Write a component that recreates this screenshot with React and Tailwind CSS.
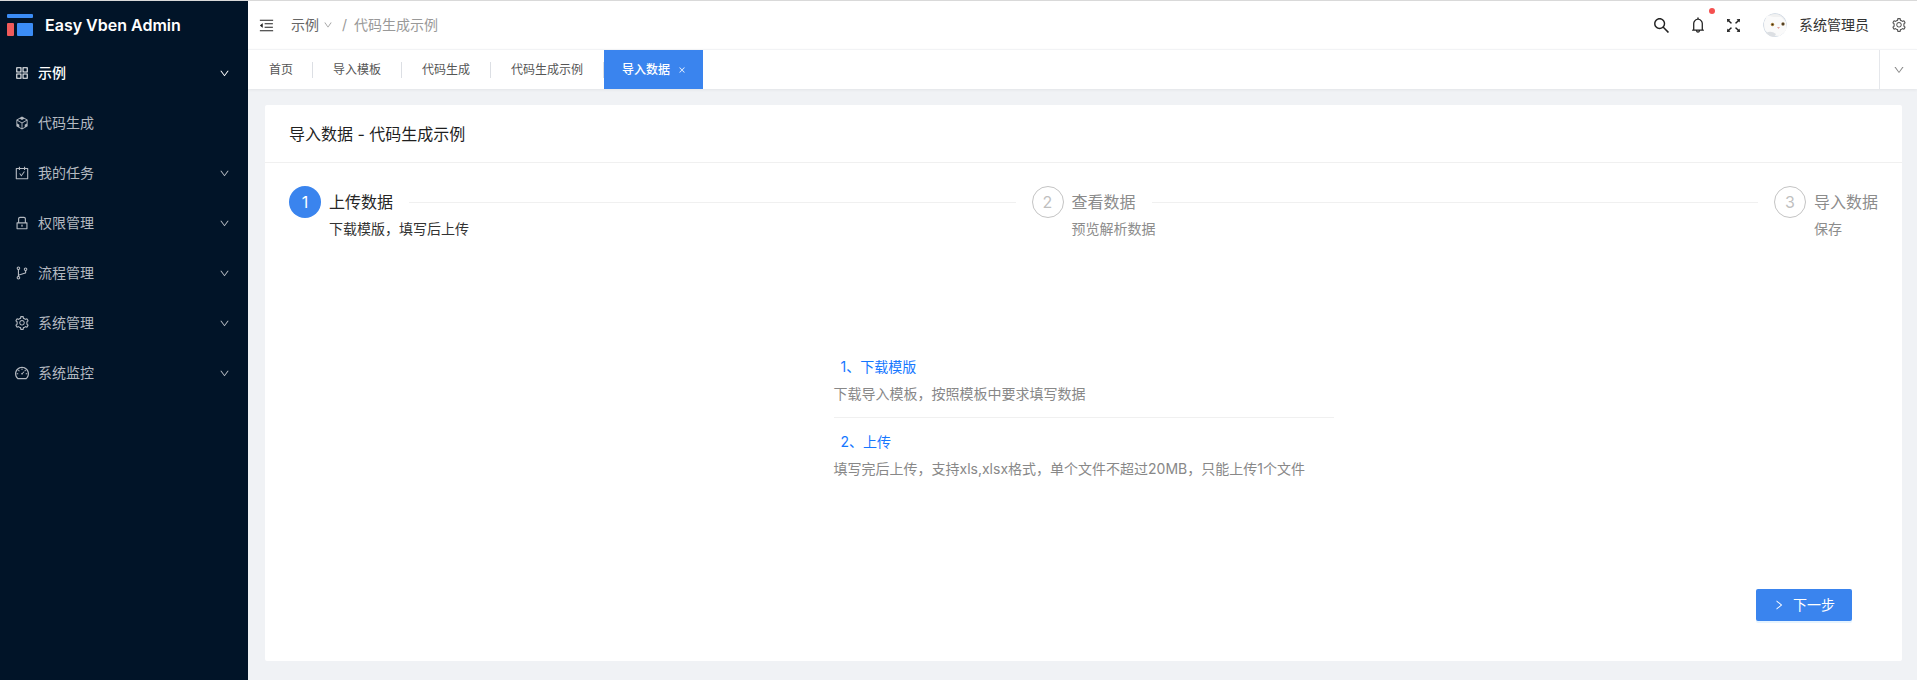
import React from 'react';
import {
  AiOutlineAppstore, AiOutlineCodeSandbox, AiOutlineCarryOut, AiOutlineLock, AiOutlineBranches,
  AiOutlineSetting, AiOutlineDashboard, AiOutlineDown, AiOutlineSearch, AiOutlineBell,
  AiOutlineFullscreen, AiOutlineMenuFold, AiOutlineRight, AiOutlineClose,
} from 'react-icons/ai';

const menu = [
  { label: '示例', icon: AiOutlineAppstore, arrow: true, active: true },
  { label: '代码生成', icon: AiOutlineCodeSandbox },
  { label: '我的任务', icon: AiOutlineCarryOut, arrow: true },
  { label: '权限管理', icon: AiOutlineLock, arrow: true },
  { label: '流程管理', icon: AiOutlineBranches, arrow: true },
  { label: '系统管理', icon: AiOutlineSetting, arrow: true },
  { label: '系统监控', icon: AiOutlineDashboard, arrow: true },
];

const tabs = ['首页', '导入模板', '代码生成', '代码生成示例'];

const steps = [
  { n: 1, title: '上传数据', desc: '下载模版，填写后上传', active: true },
  { n: 2, title: '查看数据', desc: '预览解析数据' },
  { n: 3, title: '导入数据', desc: '保存', last: true },
];

function Logo() {
  return (
    <svg width="27" height="22" viewBox="0 0 27 22" className="shrink-0">
      <rect x="0" y="0" width="26" height="4" rx="1" fill="#3b8cf5" />
      <rect x="0" y="9" width="7" height="13" rx="1" fill="#f05a5a" />
      <rect x="10" y="9" width="16" height="13" rx="1" fill="#3b8cf5" />
    </svg>
  );
}

// white cat face, small picture in the header
function CatAvatar() {
  return (
    <svg width="24" height="24" viewBox="0 0 24 24" className="rounded-full block">
      <circle cx="12" cy="12" r="12" fill="#d5dde6" />
      <circle cx="12" cy="12" r="11" fill="#f1f1f1" />
      <path d="M1 10 L4 2 L10 4 L18 4 L23 9 L24 17 L17 23 L7 22 L2 17 Z" fill="#fafafa" />
      <circle cx="9.5" cy="11.5" r="1.7" fill="#a8803c" />
      <circle cx="9.5" cy="11.5" r="0.8" fill="#2e2418" />
      <circle cx="20" cy="11" r="1.7" fill="#7a5f34" />
      <circle cx="20" cy="11" r="0.8" fill="#221a10" />
      <path d="M14 14 L17 14 L15.5 16 Z" fill="#e2a39c" />
      <path d="M3 20 Q8 17 13 21 L11 24 L5 24 Z" fill="#dcdfe3" />
    </svg>
  );
}

function Sidebar() {
  return (
    <aside className="w-[248px] shrink-0 bg-[#011428] flex flex-col">
      <div className="h-[47px] pl-[7px] flex items-center gap-[11px]">
        <Logo />
        <span className="text-white text-base font-semibold whitespace-nowrap">Easy Vben Admin</span>
      </div>
      {menu.map(m => (
        <div key={m.label} className={`h-[50px] pl-[14px] pr-[18px] flex items-center text-sm ${m.active ? 'text-white font-medium' : 'text-[#b4b9c0]'}`}>
          <m.icon size={16} />
          <span className="ml-[8px] flex-1">{m.label}</span>
          {m.arrow && <AiOutlineDown size={11} />}
        </div>
      ))}
    </aside>
  );
}

function Header() {
  return (
    <header className="h-[48px] shrink-0 bg-white flex items-center pl-[10px] pr-[10px]">
      <AiOutlineMenuFold size={17} className="text-[#222]" />
      <div className="ml-[16px] flex items-center text-sm">
        <span className="text-[#666]">示例</span>
        <AiOutlineDown size={10} className="ml-[4px] text-[#999]" />
        <span className="ml-[9px] text-[#999]">/</span>
        <span className="ml-[7px] text-[#999]">代码生成示例</span>
      </div>
      <div className="ml-auto flex items-center">
        <AiOutlineSearch size={19} className="text-[#222]" />
        <span className="relative ml-[18px]">
          <AiOutlineBell size={18} className="text-[#222]" />
          <span className="absolute -top-[8px] -right-[8px] w-[6px] h-[6px] rounded-full bg-[#f5504f]" />
        </span>
        <AiOutlineFullscreen size={19} className="ml-[17px] text-[#222]" />
        <span className="ml-[20px]"><CatAvatar /></span>
        <span className="ml-[12px] text-sm text-[#333]">系统管理员</span>
        <AiOutlineSetting size={16} className="ml-[22px] text-[#555]" />
      </div>
    </header>
  );
}

function Tabs() {
  return (
    <div className="h-[40px] shrink-0 bg-white flex shadow-[0_1px_3px_rgba(0,0,0,0.06)] border-t border-[#f2f3f5] relative">
      <div className="flex items-center text-xs text-[#555] pl-[21px]">
        {tabs.map((t, i) => (
          <React.Fragment key={t}>
            <span className="whitespace-nowrap">{t}</span>
            <span className={`w-px h-[16px] bg-[#dcdfe4] ${i === 0 ? 'ml-[19px] mr-[20px]' : i === 3 ? 'ml-[20px]' : 'mx-[20px]'}`} />
          </React.Fragment>
        ))}
      </div>
      <div className="w-[99px] bg-[#3a84ee] text-white text-xs font-medium flex items-center pl-[18px] gap-[8px]">
        <span>导入数据</span>
        <AiOutlineClose size={8} />
      </div>
      <div className="ml-auto w-[38px] border-l border-[#e5e7eb] flex items-center justify-center text-[#888]">
        <AiOutlineDown size={12} />
      </div>
    </div>
  );
}

function Steps() {
  return (
    <div className="flex px-6 pt-[23px]">
      {steps.map(s => (
        <div key={s.n} className={`flex ${s.last ? '' : 'flex-1'}`}>
          <div className={`w-8 h-8 shrink-0 rounded-full flex items-center justify-center text-base ${s.active ? 'bg-[#3a84ee] text-white' : 'border border-[#c4c4c4] text-[#bfbfbf]'}`}>{s.n}</div>
          <div className={`ml-2 ${s.last ? '' : 'flex-1'}`}>
            <div className="flex items-center h-8">
              <span className={`text-base whitespace-nowrap ${s.active ? 'text-[#262626]' : 'text-[#8c8c8c]'}`}>{s.title}</span>
              {!s.last && <span className="flex-1 h-px bg-[#f0f0f0] mx-4" />}
            </div>
            <div className={`text-sm leading-[22px] ${s.active ? 'text-[#333]' : 'text-[#8c8c8c]'}`}>{s.desc}</div>
          </div>
        </div>
      ))}
    </div>
  );
}

export default function App() {
  return (
    <div className="h-screen flex flex-col overflow-hidden font-['Inter','Noto_Sans_CJK_SC',sans-serif]">
      <div className="h-px shrink-0 bg-[#d9d9d9]" />
      <div className="flex-1 flex min-h-0">
        <Sidebar />
        <div className="flex-1 flex flex-col min-w-0 bg-[#f0f2f5]">
          <Header />
          <Tabs />
          <main className="flex-1 min-h-0 pl-[17px] pr-[15px] pt-4 pb-[19px]">
            <section className="h-full bg-white rounded-[2px] flex flex-col">
              <div className="h-[58px] shrink-0 pl-6 flex items-center border-b border-[#f0f0f0] text-base text-[#1f1f1f]">导入数据 - 代码生成示例</div>
              <Steps />
              <div className="w-[500px] mx-auto mt-[114px] text-sm">
                <div className="h-[26px] pl-[7px] flex items-center text-[#1677ff]">1、下载模版</div>
                <div className="h-[28px] flex items-center text-[#888]">下载导入模板，按照模板中要求填写数据</div>
                <div className="mt-[9px] border-t border-[#f0f0f0]" />
                <div className="mt-[11px] h-[26px] pl-[7px] flex items-center text-[#1677ff]">2、上传</div>
                <div className="h-[28px] flex items-center text-[#888]">填写完后上传，支持xls,xlsx格式，单个文件不超过20MB，只能上传1个文件</div>
              </div>
              <div className="mt-auto pb-10 pr-[50px] flex justify-end">
                <button className="w-24 h-8 pl-[17px] rounded-[2px] bg-[#3a84ee] text-white text-sm flex items-center gap-[8px] shadow-[0_2px_0_rgba(5,145,255,0.1)]">
                  <AiOutlineRight size={12} />
                  下一步
                </button>
              </div>
            </section>
          </main>
        </div>
      </div>
    </div>
  );
}
